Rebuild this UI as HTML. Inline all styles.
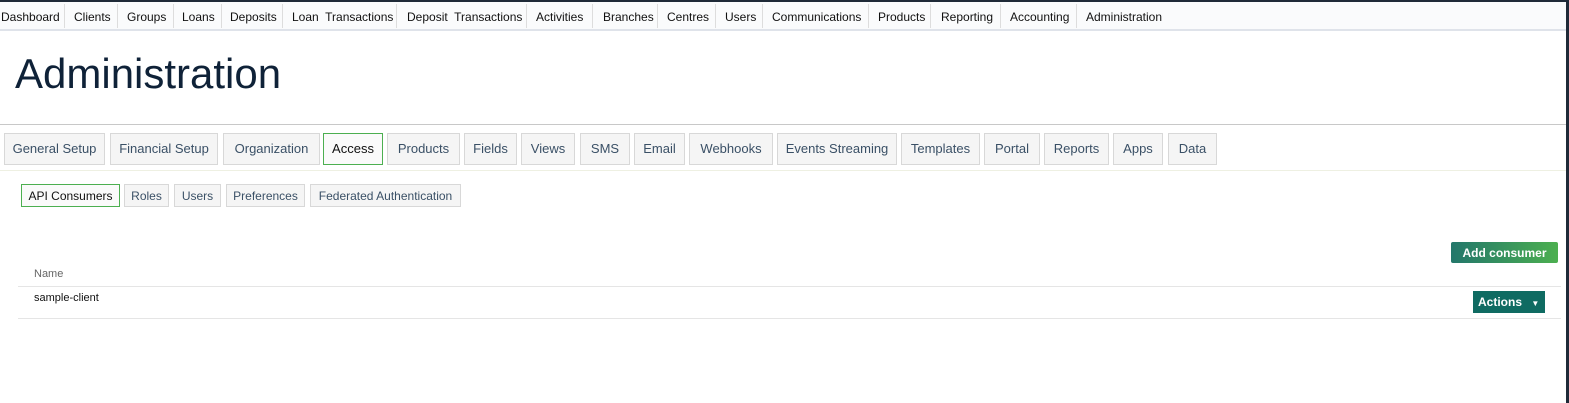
<!DOCTYPE html><html><head><style>
body{margin:0;width:1569px;height:403px;background:#fff;font-family:"Liberation Sans",sans-serif;position:relative;overflow:hidden}
.a{position:absolute;white-space:nowrap}
.nav{position:absolute;left:0;top:0;width:1566px;height:31px;background:#fafbfc;border-top:2px solid #1f2a38;border-bottom:2px solid #dfe3ea;box-sizing:border-box}
.nv{position:absolute;top:10px;font-size:12px;color:#111}
.sep{position:absolute;top:4px;width:1px;height:24px;background:#ddd}
.tab{position:absolute;top:133px;height:32px;box-sizing:border-box;border:1px solid #d8d8d8;background:#f5f5f5;font-size:13px;color:#3a5066;text-align:center;line-height:29px}
.st{position:absolute;top:184px;height:23px;box-sizing:border-box;border:1px solid #d8d8d8;background:#f5f5f5;font-size:12px;color:#3a5066;text-align:center;line-height:22px}
</style></head><body>
<div style="position:absolute;right:0;top:0;width:3px;height:403px;background:#1f2a38"></div>
<div class="nav"></div>
<div class="nv" style="left:1px">Dashboard</div><div class="sep" style="left:64px"></div>
<div class="nv" style="left:74px">Clients</div><div class="sep" style="left:117px"></div>
<div class="nv" style="left:127px">Groups</div><div class="sep" style="left:173px"></div>
<div class="nv" style="left:182px">Loans</div><div class="sep" style="left:221px"></div>
<div class="nv" style="left:230px">Deposits</div><div class="sep" style="left:282px"></div>
<div class="nv" style="left:292px">Loan&nbsp; Transactions</div><div class="sep" style="left:396px"></div>
<div class="nv" style="left:407px">Deposit&nbsp; Transactions</div><div class="sep" style="left:526px"></div>
<div class="nv" style="left:536px">Activities</div><div class="sep" style="left:592px"></div>
<div class="nv" style="left:603px">Branches</div><div class="sep" style="left:657px"></div>
<div class="nv" style="left:667px">Centres</div><div class="sep" style="left:715px"></div>
<div class="nv" style="left:725px">Users</div><div class="sep" style="left:762px"></div>
<div class="nv" style="left:772px">Communications</div><div class="sep" style="left:868px"></div>
<div class="nv" style="left:878px">Products</div><div class="sep" style="left:930px"></div>
<div class="nv" style="left:941px">Reporting</div><div class="sep" style="left:1000px"></div>
<div class="nv" style="left:1010px">Accounting</div><div class="sep" style="left:1076px"></div>
<div class="nv" style="left:1086px">Administration</div>
<div class="a" style="left:15px;top:50px;font-size:42px;color:#0f2238">Administration</div>
<div class="a" style="left:0;top:124px;width:1566px;height:1px;background:#c8c8c8"></div>
<div class="tab" style="left:4px;width:101px">General Setup</div>
<div class="tab" style="left:110px;width:108px">Financial Setup</div>
<div class="tab" style="left:223px;width:97px">Organization</div>
<div class="tab" style="left:323px;width:60px;border-color:#4caf50;background:#fafafa;color:#111">Access</div>
<div class="tab" style="left:387px;width:73px">Products</div>
<div class="tab" style="left:464px;width:53px">Fields</div>
<div class="tab" style="left:521px;width:54px">Views</div>
<div class="tab" style="left:580px;width:50px">SMS</div>
<div class="tab" style="left:634px;width:51px">Email</div>
<div class="tab" style="left:689px;width:84px">Webhooks</div>
<div class="tab" style="left:777px;width:120px">Events Streaming</div>
<div class="tab" style="left:901px;width:79px">Templates</div>
<div class="tab" style="left:984px;width:56px">Portal</div>
<div class="tab" style="left:1044px;width:65px">Reports</div>
<div class="tab" style="left:1113px;width:50px">Apps</div>
<div class="tab" style="left:1168px;width:49px">Data</div>
<div class="a" style="left:0;top:170px;width:1566px;height:1px;background:#eef0e2"></div>
<div class="st" style="left:21px;width:99px;border-color:#4caf50;background:#fafafa;color:#111">API Consumers</div>
<div class="st" style="left:124px;width:45px">Roles</div>
<div class="st" style="left:174px;width:47px">Users</div>
<div class="st" style="left:226px;width:79px">Preferences</div>
<div class="st" style="left:310px;width:151px">Federated Authentication</div>
<div class="a" style="left:1451px;top:242px;width:107px;height:21px;border-radius:2px;background:linear-gradient(90deg,#23776b,#4caf50);color:#fff;font-size:12px;font-weight:bold;text-align:center;line-height:22px">Add consumer</div>
<div class="a" style="left:34px;top:268px;font-size:11px;color:#666">Name</div>
<div class="a" style="left:18px;top:286px;width:1543px;height:1px;background:#e5e5e5"></div>
<div class="a" style="left:34px;top:292px;font-size:11px;color:#111">sample-client</div>
<div class="a" style="left:1473px;top:291px;width:72px;height:22px;background:#0f6b62;color:#fff;font-size:12px;font-weight:bold;line-height:23px;padding-left:5px;box-sizing:border-box">Actions <span style="font-size:8px;margin-left:6px">▼</span></div>
<div class="a" style="left:18px;top:318px;width:1543px;height:1px;background:#e5e5e5"></div>
</body></html>
